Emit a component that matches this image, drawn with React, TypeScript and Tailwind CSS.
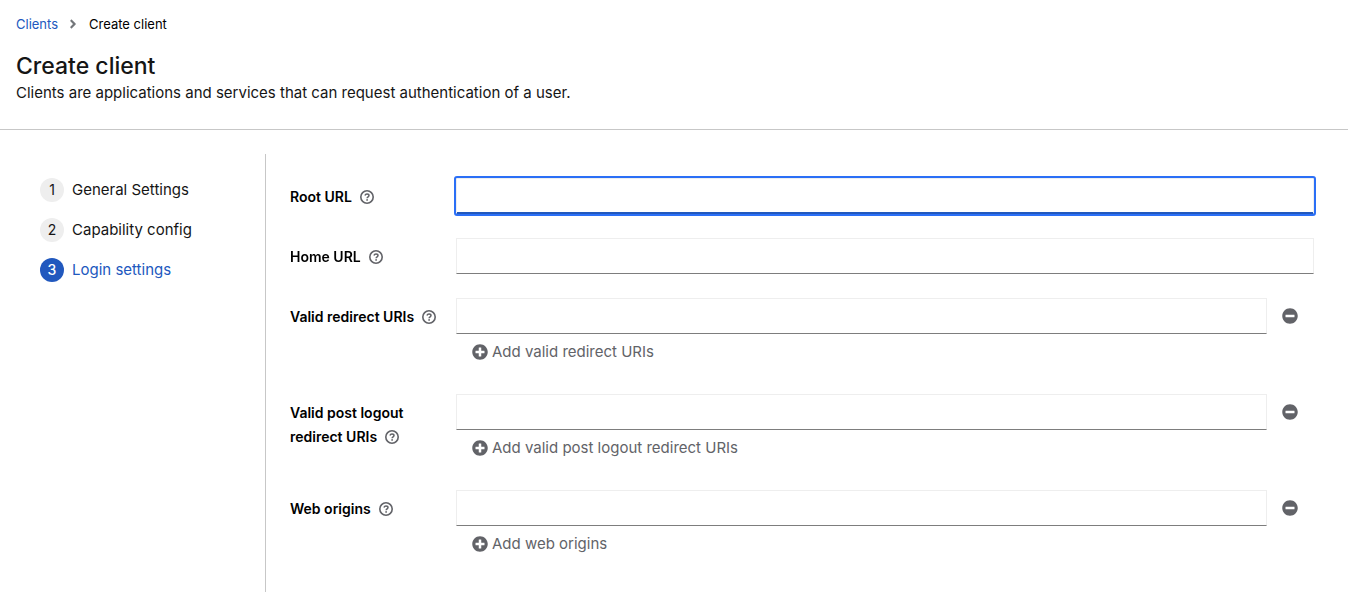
import { useId } from "react";
import { FaAngleRight, FaMinusCircle, FaPlusCircle } from "react-icons/fa";

const steps = ["General Settings", "Capability config", "Login settings"];
const activeStep = 2;

const inputBase =
  "h-9 min-w-0 flex-1 border border-[#eeeeee] border-b-[#7d7d7d] bg-white px-2 text-[15px] text-[#151515] focus:rounded-[1px] focus:border-b-[#2158be] focus:shadow-[inset_0_-1px_0_#2158be] focus:outline-2 focus:outline-[#2b6ff6]";

function HelpIcon() {
  return (
    <svg viewBox="0 0 14 14" className="size-3.5" fill="none" stroke="currentColor" aria-hidden="true">
      <circle cx="7" cy="7" r="6.2" strokeWidth="1.6" />
      <path d="M4.9 5.5C5.3 4.5 6 4.1 7 4.1C8.2 4.1 9 4.7 9 5.6C9 6.8 7.1 6.8 7.1 8.2" strokeWidth="1.5" />
      <circle cx="7.1" cy="9.9" r="0.9" fill="currentColor" stroke="none" />
    </svg>
  );
}

type FieldProps = { label: string; addLabel?: string; autoFocus?: boolean };

function Field({ label, addLabel, autoFocus }: FieldProps) {
  const id = useId();
  return (
    <div className="grid grid-cols-[150px_1fr] gap-x-4">
      <div className="pt-[7px] text-sm/6 font-semibold text-black">
        <label htmlFor={id}>{label}</label>
        <button type="button" aria-label={`Help for ${label}`} className="ml-2 align-[-2px] text-[#626368]">
          <HelpIcon />
        </button>
      </div>
      <div>
        <div className="flex">
          <input id={id} type="text" autoFocus={autoFocus} className={inputBase} />
          {addLabel && (
            <button type="button" aria-label={`Remove ${label}`} className="pr-4 pl-[15px] text-[#626368]">
              <FaMinusCircle className="size-4" />
            </button>
          )}
        </div>
        {addLabel && (
          <button type="button" className="flex h-9 items-center gap-1 px-4 text-[15px] text-[#626368]">
            <FaPlusCircle className="size-4" />
            {addLabel}
          </button>
        )}
      </div>
    </div>
  );
}

export default function App() {
  return (
    <div className="flex min-h-screen flex-col bg-white font-['Inter',sans-serif] text-[#151515]">
      <header className="border-b border-[#c7c7c7] px-4 pt-3 pb-6">
        <nav aria-label="Breadcrumb" className="flex items-center text-[13px]/6">
          <a href="#clients" className="text-[#2158be]">Clients</a>
          <FaAngleRight className="mx-2 size-3.5 text-[#73767a]" />
          <span aria-current="page" className="ml-px text-black">Create client</span>
        </nav>
        <h1 className="mt-4 text-[23px]/[29px] font-medium">Create client</h1>
        <p className="text-[15px]/6">Clients are applications and services that can request authentication of a user.</p>
      </header>
      <main className="flex flex-1 pt-6">
        <nav aria-label="Steps" className="w-[266px] shrink-0 border-r border-[#c7c7c7] pt-6 pl-10">
          <ol className="flex flex-col gap-4">
            {steps.map((step, i) => (
              <li key={step}>
                <button
                  type="button"
                  aria-current={i === activeStep ? "step" : undefined}
                  className={`flex items-center gap-2 text-[15px]/6 ${i === activeStep ? "text-[#2158be]" : ""}`}
                >
                  <span
                    className={`flex size-6 items-center justify-center rounded-full text-sm ${
                      i === activeStep ? "bg-[#2158be] font-medium text-white" : "bg-[#eeeeee]"
                    }`}
                  >
                    {i + 1}
                  </span>
                  {step}
                </button>
              </li>
            ))}
          </ol>
        </nav>
        <form className="flex flex-1 flex-col gap-6 pt-6 pr-[34px] pl-6">
          <Field label="Root URL" autoFocus />
          <Field label="Home URL" />
          <Field label="Valid redirect URIs" addLabel="Add valid redirect URIs" />
          <Field label="Valid post logout redirect URIs" addLabel="Add valid post logout redirect URIs" />
          <Field label="Web origins" addLabel="Add web origins" />
        </form>
      </main>
    </div>
  );
}
